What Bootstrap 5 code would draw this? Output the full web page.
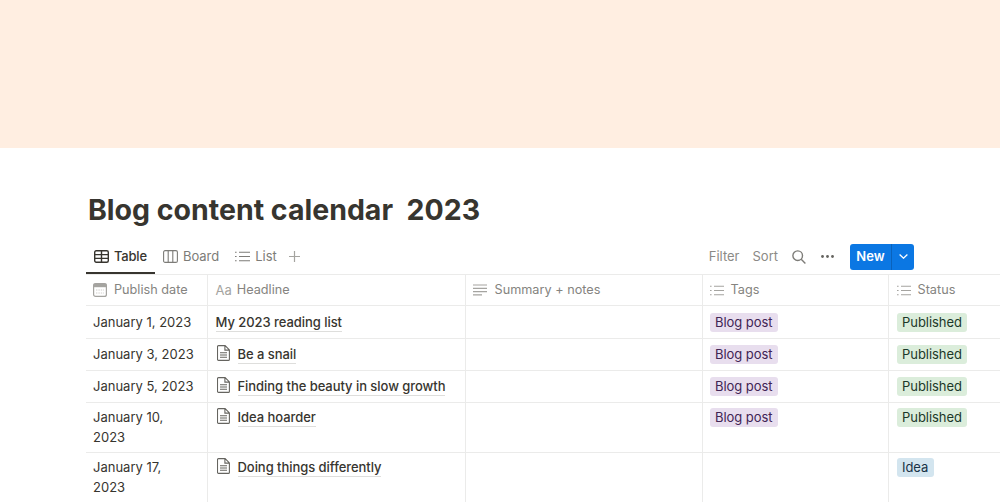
<!DOCTYPE html>
<html lang="en">
<head>
  <meta charset="UTF-8" />
  <title>Blog content calendar 2023</title>
  <link href="https://cdn.jsdelivr.net/npm/bootstrap@5.3.0/dist/css/bootstrap.min.css" rel="stylesheet" />
  <style>
    html, body {
      height: 502px;
      overflow: hidden;
    }

    body {
      font-family: Inter, "Liberation Sans", sans-serif;
      color: #37352f;
      background: #fff;
    }

    .cover-band {
      height: 148px;
      background: #ffeee1;
    }

    .page-wrap {
      padding-left: 86px;
      width: 1000px;
    }

    .page-title {
      margin: 44px 0 0 2px;
      height: 47px;
      font-size: 28.5px;
      line-height: 36px;
      font-weight: 700;
      color: #37352f;
      white-space: pre;
    }

    .view-bar {
      width: 828px;
      height: 35px;
      font-size: 13px;
      color: #7d7c78;
    }

    .view-tab {
      height: 35px;
      padding: 0 8px;
      gap: 5px;
      display: flex;
      align-items: center;
    }

    .view-tab.active-tab {
      color: #37352f;
      font-weight: 500;
      letter-spacing: -0.2px;
      box-shadow: inset 0 -2px 0 #37352f;
    }

    .tool-item {
      font-size: 13px;
      color: #8b8a86;
    }

    .gap-filter { margin-right: 13px; }
    .gap-sort { margin-right: 14px; }
    .gap-search { margin-right: 15px; }

    .new-btn {
      width: 64px;
      height: 26px;
      margin-left: 16px;
      background: #0b77e3;
      color: #fff;
      border-radius: 3px;
      font-size: 13px;
      font-weight: 600;
      overflow: hidden;
    }

    .new-main {
      width: 42px;
      border-right: 1px solid #0a62bb;
    }

    .new-drop {
      flex: 1;
    }

    .db-table {
      table-layout: fixed;
      width: 914px;
      margin: 0;
      border-top: 1px solid #ebebea;
      border-collapse: collapse;
      font-size: 13px;
      color: #37352f;
    }

    .db-table th,
    .db-table td {
      padding: 0 7px;
      border-bottom: 1px solid #ebebea;
      border-right: 1px solid #ebebea;
      font-weight: 400;
      vertical-align: top;
      line-height: 20px;
    }

    .db-table th:last-child,
    .db-table td:last-child {
      border-right: 0;
      padding-left: 8px;
    }

    .db-table th:nth-child(2),
    .db-table td:nth-child(2) {
      padding-left: 8px;
    }

    .db-table th {
      height: 31px;
      color: #85847f;
      font-size: 12.7px;
      padding-top: 5px;
    }

    .db-table tr.row-a td { height: 33px; padding-top: 6px; }
    .db-table tr.row-b td { height: 32px; padding-top: 5px; }
    .db-table tr.row-c td { height: 50px; padding-top: 4px; }

    .head-cell {
      display: flex;
      align-items: center;
      gap: 7px;
    }

    .head-cell.head-title {
      gap: 5px;
    }

    .aa-mark {
      font-size: 13px;
      color: #a5a4a0;
    }

    .page-name {
      display: flex;
      gap: 8px;
      font-weight: 500;
      margin-top: 1px;
      letter-spacing: -0.05px;
    }

    .page-name span {
      border-bottom: 1px solid #dededc;
      line-height: 18px;
      height: 19px;
      white-space: nowrap;
    }

    .db-table td.date-text {
      padding-right: 11px;
    }

    .tag-pill {
      display: inline-block;
      height: 19px;
      line-height: 19px;
      padding: 0 5.5px;
      border-radius: 3px;
      white-space: nowrap;
      letter-spacing: -0.05px;
    }

    .row-c .tag-pill {
      margin-top: 1px;
    }

    .tag-purple { background: #e8deee; color: #412454; }
    .tag-green { background: #dbeddb; color: #1c3829; }
    .tag-blue { background: #d3e5ef; color: #183347; }

    .db-icon {
      flex: none;
      display: block;
    }

    .doc-icon {
      margin-left: 1px;
    }
  </style>
</head>
<body>
  <div class="cover-band"></div>

  <div class="page-wrap">
    <h1 class="page-title">Blog content calendar  2023</h1>

    <div class="view-bar d-flex align-items-center">
      <div class="view-tab active-tab">
        <svg class="db-icon" width="15" height="13" viewBox="0 0 15 13" fill="none" stroke="#37352f" stroke-width="1.4"><rect x=".7" y=".7" width="13.6" height="11.6" rx="1.5"/><path d="M.7 4.6h13.6M.7 8.4h13.6M7.5.7v11.6"/></svg>
        <span>Table</span>
      </div>
      <div class="view-tab">
        <svg class="db-icon" width="15" height="13" viewBox="0 0 15 13" fill="none" stroke="#7d7c78" stroke-width="1.1"><rect x=".6" y=".6" width="13.8" height="11.8" rx="1.5"/><path d="M5.2.6v11.8M9.8.6v11.8"/></svg>
        <span>Board</span>
      </div>
      <div class="view-tab">
        <svg class="db-icon" width="15" height="11" viewBox="0 0 15 11" fill="none" stroke="#7d7c78" stroke-width="1.1"><path d="M4 1.2h11M4 5.5h11M4 9.8h11M0 1.2h1.6M0 5.5h1.6M0 9.8h1.6"/></svg>
        <span>List</span>
      </div>
      <svg class="db-icon ms-1" width="11" height="11" viewBox="0 0 11 11" fill="none" stroke="#a5a4a0" stroke-width="1.2"><path d="M5.5 0v11M0 5.5h11"/></svg>

      <div class="ms-auto d-flex align-items-center">
        <span class="tool-item gap-filter">Filter</span>
        <span class="tool-item gap-sort">Sort</span>
        <svg class="db-icon gap-search" width="14" height="14" viewBox="0 0 14 14" fill="none" stroke="#7d7c78" stroke-width="1.4"><circle cx="5.7" cy="5.7" r="4.8"/><path d="M9.2 9.2l4.2 4.2"/></svg>
        <svg class="db-icon" width="13" height="3" viewBox="0 0 13 3" fill="#65645f"><circle cx="1.5" cy="1.5" r="1.4"/><circle cx="6.5" cy="1.5" r="1.4"/><circle cx="11.5" cy="1.5" r="1.4"/></svg>
        <div class="new-btn d-flex">
          <div class="new-main d-flex align-items-center justify-content-center">New</div>
          <div class="new-drop d-flex align-items-center justify-content-center">
            <svg class="db-icon" width="9" height="5" viewBox="0 0 9 5" fill="none" stroke="#fff" stroke-width="1.3"><path d="M.6.6l3.9 3.6L8.4.6"/></svg>
          </div>
        </div>
      </div>
    </div>

    <table class="db-table">
      <colgroup>
        <col style="width: 121px" />
        <col style="width: 258px" />
        <col style="width: 237px" />
        <col style="width: 186px" />
        <col style="width: 112px" />
      </colgroup>
      <thead>
        <tr>
          <th><div class="head-cell">
            <svg class="db-icon" width="14" height="14" viewBox="0 0 14 14"><rect x=".6" y=".6" width="12.8" height="12.8" rx="2" fill="#fff" stroke="#a5a4a0" stroke-width="1.2"/><rect x=".6" y=".6" width="12.8" height="3.6" fill="#a5a4a0"/><path d="M3 7h8M3 10h8" stroke="#cfcecb" stroke-dasharray="1.4 1"/></svg>
            <span>Publish date</span></div></th>
          <th><div class="head-cell head-title"><span class="aa-mark">Aa</span><span>Headline</span></div></th>
          <th><div class="head-cell">
            <svg class="db-icon" width="15" height="12" viewBox="0 0 15 12" fill="none" stroke="#a5a4a0" stroke-width="1.2"><path d="M0 1h14M0 4.3h14M0 7.6h14M0 10.9h9"/></svg>
            <span>Summary + notes</span></div></th>
          <th><div class="head-cell">
            <svg class="db-icon" width="14" height="11" viewBox="0 0 14 11" fill="none" stroke="#a5a4a0" stroke-width="1.1"><path d="M4 1.2h10M4 5.5h10M4 9.8h10M0 1.2h1.6M0 5.5h1.6M0 9.8h1.6"/></svg>
            <span>Tags</span></div></th>
          <th><div class="head-cell">
            <svg class="db-icon" width="14" height="11" viewBox="0 0 14 11" fill="none" stroke="#a5a4a0" stroke-width="1.1"><path d="M4 1.2h10M4 5.5h10M4 9.8h10M0 1.2h1.6M0 5.5h1.6M0 9.8h1.6"/></svg>
            <span>Status</span></div></th>
        </tr>
      </thead>
      <tbody id="rows"></tbody>
    </table>
  </div>

  <script src="https://cdn.jsdelivr.net/npm/bootstrap@5.3.0/dist/js/bootstrap.bundle.min.js"></script>
  <script>
    const docIcon = '<svg class="db-icon doc-icon" width="13" height="16" viewBox="0 0 13 16" fill="none" stroke="#65645f" stroke-width="1.1"><path d="M1.5.6h6.6l4.3 4.3v9.5a1 1 0 0 1-1 1h-9.9a1 1 0 0 1-1-1V1.6a1 1 0 0 1 1-1zM7.9.6v4.5h4.5M3 7.8h7M3 10h7M3 12.2h7"/></svg>';

    const rows = [
      { date: "January 1, 2023", name: "My 2023 reading list", icon: false, tag: true, status: "Published", cls: "row-a" },
      { date: "January 3, 2023", name: "Be a snail", icon: true, tag: true, status: "Published", cls: "row-b" },
      { date: "January 5, 2023", name: "Finding the beauty in slow growth", icon: true, tag: true, status: "Published", cls: "row-b" },
      { date: "January 10, 2023", name: "Idea hoarder", icon: true, tag: true, status: "Published", cls: "row-c" },
      { date: "January 17, 2023", name: "Doing things differently", icon: true, tag: false, status: "Idea", cls: "row-c" }
    ];

    document.getElementById("rows").innerHTML = rows.map(r => `
      <tr class="${r.cls}">
        <td class="date-text">${r.date}</td>
        <td><div class="page-name">${r.icon ? docIcon : ""}<span>${r.name}</span></div></td>
        <td></td>
        <td>${r.tag ? '<span class="tag-pill tag-purple">Blog post</span>' : ""}</td>
        <td><span class="tag-pill ${r.status === "Idea" ? "tag-blue" : "tag-green"}">${r.status}</span></td>
      </tr>`).join("");
  </script>
</body>
</html>
